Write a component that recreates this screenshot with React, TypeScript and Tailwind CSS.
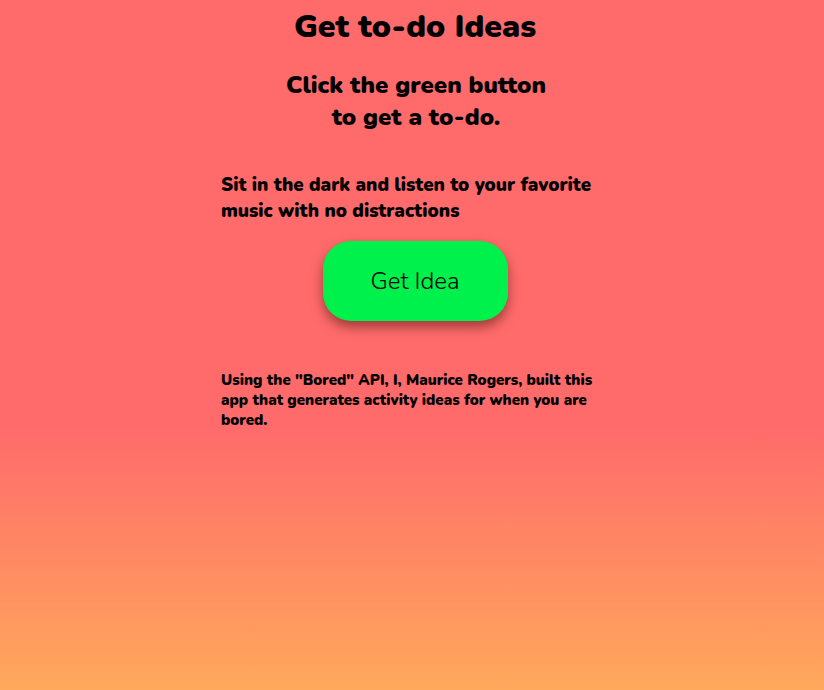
export default function App() {
  return (
    <div className="min-h-[690px] w-full bg-[linear-gradient(180deg,#ff6b6b_0%,#ff6b6b_62%,#ffa95c_100%)] font-['Nunito','Lato','Noto_Sans',sans-serif] text-black">
      <div className="mx-auto flex w-[398px] flex-col pl-[8px]">
        <h1 className="mt-[6px] pr-[2px] text-center text-[32px] font-black leading-[42px]">Get to-do Ideas</h1>
        <h2 className="mt-[21px] text-center text-[24px] font-black leading-[32px]">
          Click the green button
          <br />
          to get a to-do.
        </h2>
        <p className="mt-[39px] text-[18.7px] font-black leading-[26px]">
          Sit in the dark and listen to your favorite music with no distractions
        </p>
        <div className="mt-[17px] flex justify-center pr-[2px]">
          <button
            type="button"
            className="h-[80px] w-[185px] rounded-[28px] bg-[#00f14b] text-[24px] font-light text-black shadow-[0_6px_12px_rgba(80,20,20,0.55)]"
          >
            Get Idea
          </button>
        </div>
        <p className="mt-[49px] text-[15px] font-black leading-[20px]">
          Using the "Bored" API, I, Maurice Rogers, built this app that generates activity ideas for when you are bored.
        </p>
      </div>
    </div>
  );
}
